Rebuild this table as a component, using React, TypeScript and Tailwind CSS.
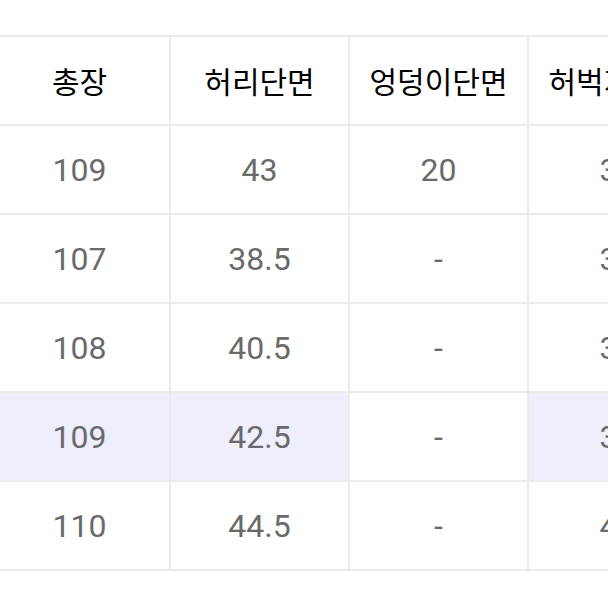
const headers = ["총장", "허리단면", "엉덩이단면", "허벅지단면"];

const rows: { cells: string[]; highlight?: boolean }[] = [
  { cells: ["109", "43", "20", "34"] },
  { cells: ["107", "38.5", "-", "33"] },
  { cells: ["108", "40.5", "-", "33"] },
  { cells: ["109", "42.5", "-", "34"], highlight: true },
  { cells: ["110", "44.5", "-", "41"] },
];

export default function App() {
  return (
    <div
      className="w-[608px] h-[608px] overflow-hidden bg-white pt-[35px]"
      style={{ fontFamily: 'Roboto, "Noto Sans CJK KR", sans-serif' }}
    >
      <div className="ml-[-10px] w-[720px] border-t-2 border-[#ebebeb]">
        <div className="flex border-b-2 border-[#ebebeb]">
          {headers.map((h, i) => (
            <div
              key={h}
              className={`w-[179px] h-[87px] flex items-center justify-center text-[30px] text-black ${
                i > 0 ? "border-l-2 border-[#ebebeb]" : ""
              }`}
              style={{ fontFamily: '"Noto Sans CJK KR", sans-serif' }}
            >
              <span className="whitespace-nowrap">{h}</span>
            </div>
          ))}
        </div>
        {rows.map((row, r) => (
          <div key={r} className="flex border-b-2 border-[#ebebeb]">
            {row.cells.map((c, i) => {
              const bg = row.highlight && i !== 2 ? "bg-[#eeeefc]" : "bg-white";
              return (
                <div
                  key={i}
                  className={`w-[179px] h-[87px] flex items-center justify-center text-[32px] text-[#6a6a6a] ${bg} ${
                    i > 0 ? "border-l-2 border-[#ebebeb]" : ""
                  }`}
                >
                  {c}
                </div>
              );
            })}
          </div>
        ))}
      </div>
    </div>
  );
}
